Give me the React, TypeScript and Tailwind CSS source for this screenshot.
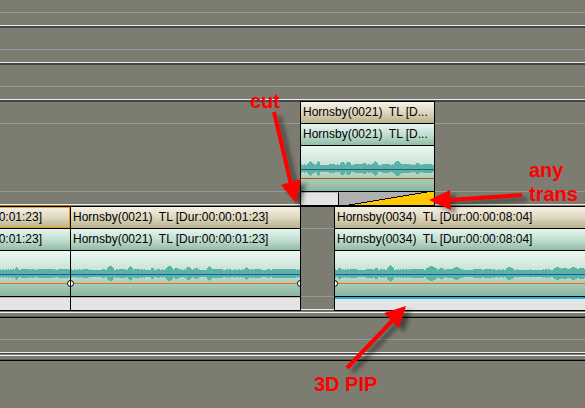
import clsx from 'clsx'
import type { ReactNode } from 'react'

// position, height and half width of a spike, in px from the start of the clip
type Peak = [number, number, number]

const leadPeaks: Peak[] = [[16, 3, 1], [25, 1, 4], [42, 1, 4], [50, 1, 3], [62, 1, 4]]
const introPeaks: Peak[] = [
  [14, 1, 2], [39, 4, 3], [51, 1, 1], [59, 4, 2], [66, 1, 2], [81, 2, 1], [98, 4, 3],
  [105, 2, 2], [117, 3, 2], [125, 2, 1], [138, 4, 2], [146, 1, 2], [175, 3, 1], [186, 1, 3], [206, 1, 4], [218, 1, 6],
]
const mainPeaks: Peak[] = [
  [4, 2, 1], [18, 1, 3], [35, 1, 2], [41, 2, 1], [55, 5, 3], [80, 1, 5], [96, 4, 5], [106, 2, 2],
  [114, 1, 2], [121, 3, 4], [142, 1, 4], [152, 1, 2], [174, 3, 3], [222, 3, 3], [229, 2, 3], [238, 3, 4], [246, 2, 4],
]
const overlayPeaks: Peak[] = [
  [9, 4, 2], [17, 4, 1], [30, 1, 2], [41, 3, 2], [47, 3, 2], [57, 1, 4], [63, 2, 1],
  [74, 4, 2], [83, 1, 2], [96, 4, 3], [103, 1, 4], [116, 2, 1], [126, 1, 4],
]

const quietParts = [[180, 209]]

function waveHeight(x: number, peaks: Peak[], quiet: boolean) {
  if (quiet) return x % 13 === 0 ? 1 : 0
  const noise = (x * 7 + ((x * x) % 11)) % 5 < 2 ? 1 : 0
  return peaks.reduce((max, [px, h, w]) => {
    const d = Math.abs(x - px)
    return d > w ? max : Math.max(max, Math.ceil(h * (1 - d / (w + 2))))
  }, noise)
}

function Waveform({
  peaks,
  length,
  quiet = [],
  muted,
  start,
  end,
}: {
  peaks: Peak[]
  length: number
  quiet?: number[][]
  muted?: boolean
  start?: boolean
  end?: boolean
}) {
  const path = Array.from({ length }, (_, x) => {
    const h = waveHeight(x, peaks, quiet.some(([a, b]) => x >= a && x <= b))
    return `M${x} ${19 - h}h1v${7 + h * 2}h-1z`
  }).join('')

  return (
    <svg className="block w-full h-full" aria-hidden="true">
      <path d={path} fill="#5ab3a4" shapeRendering="crispEdges" />
      <rect y="22" width="100%" height="1" fill="#70a8a8" />
      <rect y="23" width="100%" height="1" fill={muted ? '#17608c' : '#0563b4'} />
      <rect y="32" width="100%" height="1" fill={muted ? '#b84a14' : '#f46a12'} />
      {start && <circle cx="-0.5" cy="32.5" r="3" fill="#fff" stroke="#000" />}
      {end && (
        <svg x="100%" overflow="visible">
          <circle cx="0.5" cy="32.5" r="3" fill="#fff" stroke="#000" />
        </svg>
      )}
    </svg>
  )
}

function Clip({
  title,
  className,
  titleClass,
  selected,
  wave,
  children,
}: {
  title: string
  className?: string
  titleClass?: string
  selected?: boolean
  wave: ReactNode
  children: ReactNode
}) {
  return (
    <article className={clsx('flex flex-col border-y border-black overflow-hidden', className)}>
      <h2
        className={clsx(
          'relative flex h-[22px] border-b border-black bg-linear-to-b from-[#f5f1e4] via-[#ded7c0] to-[#b9b18b] leading-[21px] whitespace-pre px-0.5',
          titleClass
        )}
      >
        {title}
        {selected && <span className="absolute inset-0 border border-l-0 border-[#f59c0c]" />}
      </h2>
      <p
        className={clsx(
          'flex h-[22px] border-b border-black bg-linear-to-b from-[#e6f5ef] via-[#c2dfd1] to-[#93bca8] leading-[21px] whitespace-pre px-0.5',
          titleClass
        )}
      >
        {title}
      </p>
      <div className="h-[46px] border-b border-black bg-linear-to-b from-[#ebf7f2] via-[#c3e0d1] to-[#8bb5a1]">{wave}</div>
      <div className="flex h-[13px] bg-[#e4e4e4]">{children}</div>
    </article>
  )
}

function Gap({ className, top = 'bg-[#44444c]', bottom = 'bg-[#7c7c70]' }: { className?: string; top?: string; bottom?: string }) {
  return (
    <div className={clsx('flex flex-col', className)}>
      <div className={clsx('h-px', top)} />
      <div className="h-[22px] border-b border-[#98989a]" />
      <div className="h-[68px] border-b border-[#98989a]" />
      <div className="h-[13px] border-b border-[#ececf0]" />
      <div className={clsx('h-px', bottom)} />
    </div>
  )
}

function Arrow({ shaft, head }: { shaft: string; head: string }) {
  return (
    <g className="drop-shadow-[5px_4px_2px_rgba(0,0,0,0.45)]">
      <path d={shaft} stroke="#ff0000" strokeWidth="4" fill="none" />
      <path d={head} fill="#ff0000" />
    </g>
  )
}

export default function App() {
  return (
    <main className="relative min-h-screen overflow-hidden bg-[#7c7c70] font-['Liberation_Sans',Arial,sans-serif] text-[12px] text-black">
      {/* Empty tracks */}
      <div className="h-[13px] border-b border-[#98989a]" />
      <div className="h-[13px] border-b border-[#e8e8ee]" />
      <div className="h-6 border-t-2 border-t-[#44444c] border-b border-b-[#98989a]" />
      <div className="h-[13px] border-b border-[#e8e8ee]" />
      <div className="h-6 border-t-2 border-t-[#44444c] border-b border-b-[#98989a]" />
      <div className="h-[13px] border-b border-[#e8e8ee]" />
      <div className="h-px bg-[#44444c]" />

      {/* Overlay track */}
      <section className="flex">
        <Gap className="w-[300px]" />
        <Clip
          title="Hornsby(0021)  TL [D..."
          className="w-[135px] border-x"
          wave={<Waveform peaks={overlayPeaks} length={133} muted />}
        >
          <div className="w-[38px] border-r border-t border-t-[#b4b4b4] border-black" />
          <div className="flex-1 bg-[#b0b0b0]">
            <svg className="block w-full h-full" viewBox="0 0 95 13" preserveAspectRatio="none" aria-hidden="true">
              <path d="M10 13L88 0H95V13Z" fill="#ffc800" />
              <path d="M10 13L88 0" stroke="#000" fill="none" shapeRendering="crispEdges" />
            </svg>
          </div>
        </Clip>
        <Gap className="flex-1" />
      </section>

      {/* Main track */}
      <section className="flex">
        <Clip
          title="0:01:23]"
          className="w-[70px]"
          titleClass="justify-end pr-7"
          selected
          wave={<Waveform peaks={leadPeaks} length={70} end />}
        >
          <div className="flex-1 border-t border-[#b4b4b4]" />
        </Clip>
        <Clip
          title="Hornsby(0021)  TL [Dur:00:00:01:23]"
          className="w-[231px] border-x"
          wave={<Waveform peaks={introPeaks} length={229} start end />}
        >
          <div className="flex-1 border-t border-[#b4b4b4]" />
        </Clip>
        <Gap className="w-[33px]" top="bg-black" bottom="bg-[#5c5c54]" />
        <Clip
          title="Hornsby(0034)  TL [Dur:00:00:08:04]"
          className="flex-1 border-l"
          wave={<Waveform peaks={mainPeaks} length={250} quiet={quietParts} start />}
        >
          <div className="flex-1 border-t-2 border-[#1cb8d8]" />
        </Clip>
      </section>

      {/* Lower tracks */}
      <div className="h-0.5 border-b border-[#f4f4f0]" />
      <div className="h-1 border-b border-[#5c5c54]" />
      <div className="h-px bg-black" />
      <div className="h-[22px] border-b border-[#98989a]" />
      <div className="h-[13px] border-b border-[#e8e8ee]" />
      <div className="h-px bg-[#44444c]" />
      <div className="h-0.5 border-b border-[#f4f4f0]" />
      <div className="h-1 border-b border-[#5c5c54]" />
      <div className="h-px bg-black" />

      {/* Notes over the timeline */}
      <svg className="absolute left-0 top-0 w-[585px] h-[408px] pointer-events-none" viewBox="0 0 585 408" aria-hidden="true">
        <Arrow shaft="M274 112L291 184" head="M281 185L301 179L296 203Z" />
        <Arrow shaft="M522 195L448 200" head="M450 190L451 210L429 200Z" />
        <Arrow shaft="M347 368L393 320" head="M384 313L406 306L399 328Z" />
      </svg>
      <div className="text-[20px] leading-6 font-bold text-[#ff0000]">
        <p className="absolute left-[250px] top-[89px]">cut</p>
        <p className="absolute left-[529px] top-[158px]">
          any
          <br />
          trans
        </p>
        <p className="absolute left-[314px] top-[372px]">3D PIP</p>
      </div>
    </main>
  )
}
